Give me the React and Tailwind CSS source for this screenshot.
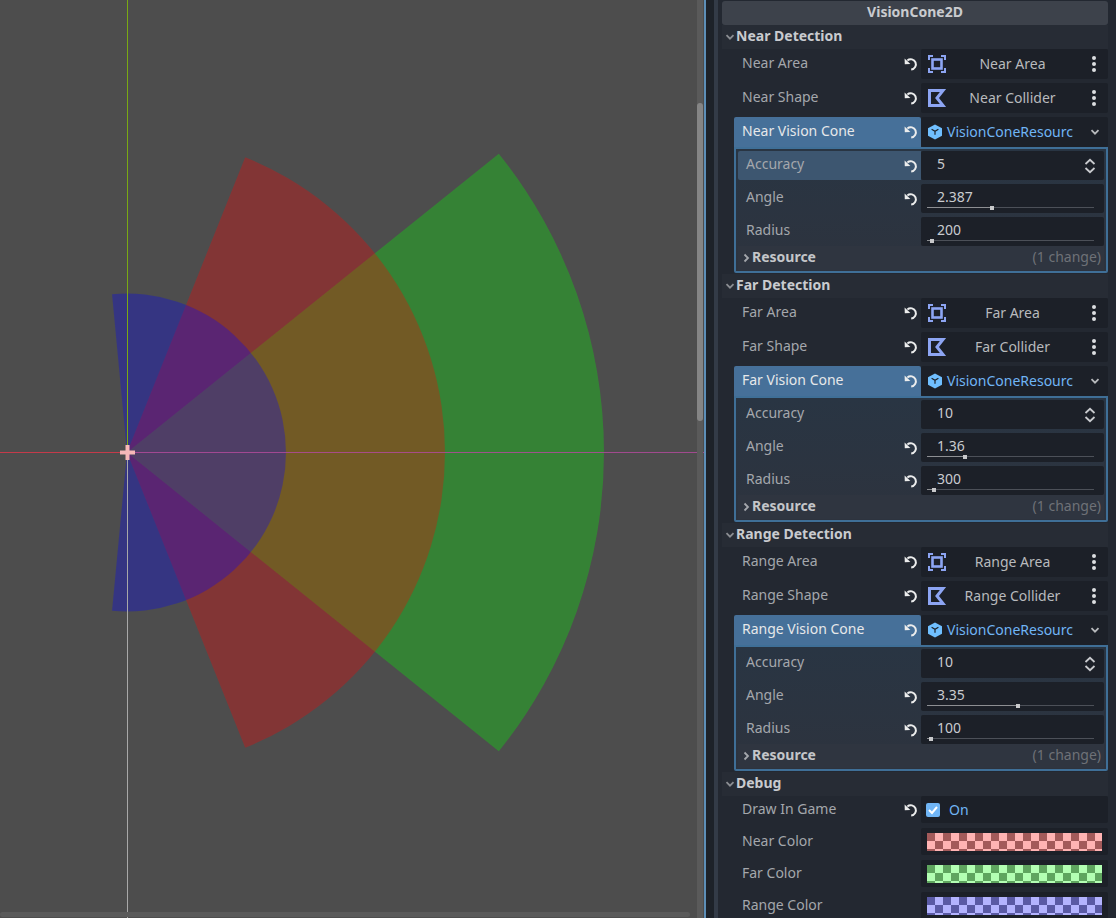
import { Fragment } from 'react';

const sections = [
  {
    title: 'Near Detection',
    area: 'Near Area',
    shape: 'Near Shape',
    collider: 'Near Collider',
    cone: 'Near Vision Cone',
    accuracy: '5',
    accuracyReset: true,
    highlight: true,
    angle: '2.387',
    anglePos: 38,
    radius: '200',
    radiusPos: 2,
    radiusReset: false,
  },
  {
    title: 'Far Detection',
    area: 'Far Area',
    shape: 'Far Shape',
    collider: 'Far Collider',
    cone: 'Far Vision Cone',
    accuracy: '10',
    accuracyReset: false,
    angle: '1.36',
    anglePos: 21.5,
    radius: '300',
    radiusPos: 3,
    radiusReset: true,
  },
  {
    title: 'Range Detection',
    area: 'Range Area',
    shape: 'Range Shape',
    collider: 'Range Collider',
    cone: 'Range Vision Cone',
    accuracy: '10',
    accuracyReset: false,
    angle: '3.35',
    anglePos: 53.5,
    radius: '100',
    radiusPos: 1,
    radiusReset: true,
  },
];

function sector(r, angle) {
  const x = 127 + r * Math.cos(angle);
  const dy = r * Math.sin(angle);
  const large = angle > Math.PI / 2 ? 1 : 0;
  return `M127 452.5 L${x} ${452.5 - dy} A${r} ${r} 0 ${large} 1 ${x} ${452.5 + dy} Z`;
}

function ResetIcon() {
  return (
    <svg width="16" height="16" viewBox="0 0 16 16" fill="none" stroke="#eceded" strokeWidth="2">
      <path d="M4.4 4.4 A5.2 5.2 0 1 1 8.2 13.6" />
      <path d="M1.6 2.6 L1.8 8.2 L7.4 8 Z" fill="#eceded" stroke="none" />
    </svg>
  );
}

function Chevron({ right, className }) {
  return (
    <svg width="10" height="10" viewBox="0 0 10 10" fill="none" stroke="currentColor" strokeWidth="1.8" className={className}>
      <path d={right ? 'M3.5 1.5 L7 5 L3.5 8.5' : 'M1.5 3.2 L5 6.7 L8.5 3.2'} />
    </svg>
  );
}

function AreaIcon() {
  return (
    <svg width="20" height="20" viewBox="0 0 20 20" fill="none" stroke="#8da5f3" strokeWidth="2">
      <path d="M2 6 V2 H6 M14 2 H18 V6 M18 14 V18 H14 M6 18 H2 V14" />
      <rect x="5.5" y="5.5" width="9" height="9" strokeWidth="2.6" />
    </svg>
  );
}

function ShapeIcon() {
  return (
    <svg width="20" height="20" viewBox="0 0 20 20" fill="none" stroke="#8da5f3" strokeWidth="3">
      <path d="M2.5 2.5 H16 L10 10 L16 17.5 H2.5 Z" />
    </svg>
  );
}

function CubeIcon() {
  return (
    <svg width="16" height="16" viewBox="0 0 16 16">
      <path d="M8 0.5 L15 4.2 V11.8 L8 15.5 L1 11.8 V4.2 Z" fill="#70bfff" />
      <path d="M4.6 5.2 L8 7.2 L11.4 5.2 M8 7.2 V10.8" fill="none" stroke="#1c2028" strokeWidth="1.2" />
    </svg>
  );
}

function Dots() {
  return (
    <div className="flex w-[30px] flex-col items-center gap-[2px] pl-[2px]">
      <span className="h-[4px] w-[4px] rounded-full bg-[#dcdee1]" />
      <span className="h-[4px] w-[4px] rounded-full bg-[#dcdee1]" />
      <span className="h-[4px] w-[4px] rounded-full bg-[#dcdee1]" />
    </div>
  );
}

function Label({ text, reset, className = '', textClass = 'top-[-1px]' }) {
  return (
    <div className={`flex items-center justify-between pr-[2px] ${className}`}>
      <span className={`relative ${textClass}`}>{text}</span>
      {reset && <ResetIcon />}
    </div>
  );
}

function NodeRow({ label, value, icon }) {
  return (
    <div className="flex h-[30px] text-[#a4a7ac]">
      <Label text={label} reset className="w-[199px] pl-[20px]" />
      <div className="flex flex-1 items-center rounded-[2px] bg-[#1c2028] pl-[6px] text-[#b8babd]">
        {icon}
        <span className="flex-1 text-center">{value}</span>
        <Dots />
      </div>
    </div>
  );
}

function SliderRow({ label, value, pos, reset }) {
  return (
    <div className="flex h-[29px] text-[#a4a7ac]">
      <Label text={label} reset={reset} textClass="top-[-2px]" className="w-[183px] pl-[8px]" />
      <div className="flex flex-1 flex-col rounded-[2px] bg-[#1c2028] pl-[6px] pr-[10px]">
        <span className="h-[23px] pl-[10px] leading-[25px] text-[#c9cbcf]">{value}</span>
        <div className="relative h-[1px] bg-[#4c5058]">
          <div className="h-[1px] bg-[#8d8f93]" style={{ width: `${pos}%` }} />
          <span
            className="absolute top-[-1px] h-[4px] w-[4px] bg-[#c8c9cb]"
            style={{ left: `${pos}%` }}
          />
        </div>
      </div>
    </div>
  );
}

function Section({ s }) {
  return (
    <Fragment>
      <Header title={s.title} />
      <div className="flex flex-col gap-[4px] pb-[1px]">
        <NodeRow label={s.area} value={s.area} icon={<AreaIcon />} />
        <NodeRow label={s.shape} value={s.collider} icon={<ShapeIcon />} />
        <div className="ml-[12px]">
          <div className="flex h-[30px]">
            <Label text={s.cone} reset className="w-[187px] rounded-t-[2px] bg-[#467099] pl-[8px] text-[#e6e8ea]" />
            <div className="flex flex-1 items-center rounded-[2px] bg-[#1c2028] pl-[6px] text-[#70b5f5]">
              <CubeIcon />
              <span className="ml-[4px] w-[127px] whitespace-nowrap">VisionConeResourc</span>
              <Chevron className="ml-[16px] text-[#b8babd]" />
            </div>
          </div>
          <div className="flex h-[126px] flex-col rounded-b-[2px] border-2 border-[#3f6f97] bg-linear-to-b from-[#293543] to-[#2d333e] pl-[2px] pr-[2px] pt-[2px]">
            <div className="flex flex-col gap-[4px]">
              <div className="flex h-[29px] text-[#a4a7ac]">
                <Label
                  text="Accuracy"
                  reset={s.accuracyReset}
                  textClass="top-[-2px]"
                  className={`w-[183px] rounded-l-[2px] pl-[8px] ${s.highlight ? 'bg-[#3d5670]' : ''}`}
                />
                <div className="flex flex-1 items-center justify-between rounded-[2px] bg-[#1c2028] pl-[16px] pr-[7px] text-[#c9cbcf]">
                  <span className="relative top-[-2px]">{s.accuracy}</span>
                  <svg width="14" height="16" viewBox="0 0 14 16" fill="none" stroke="#c9cbcf" strokeWidth="1.8">
                    <path d="M2.5 6 L7 1.8 L11.5 6 M2.5 10 L7 14.2 L11.5 10" />
                  </svg>
                </div>
              </div>
              <SliderRow label="Angle" value={s.angle} pos={s.anglePos} reset />
              <SliderRow label="Radius" value={s.radius} pos={s.radiusPos} reset={s.radiusReset} />
            </div>
            <div className="flex h-[24px] items-center justify-between bg-[#2f3540] pl-[3px] pr-[3px]">
              <div className="flex items-center font-bold text-[#c4c6c9]">
                <Chevron right className="mr-[1px] w-[10px] text-[#a4a7ac]" />
                <span className="relative top-[-1px]">Resource</span>
              </div>
              <span className="relative top-[-1px] text-[#6e7177]">(1 change)</span>
            </div>
          </div>
        </div>
      </div>
    </Fragment>
  );
}

function Header({ title }) {
  return (
    <div className="flex h-[24px] items-center bg-[#272c35] pl-[3px] font-bold text-[#c9cbcf]">
      <Chevron className="mr-[1px] text-[#8b8e93]" />
      <span className="relative top-[-1px]">{title}</span>
    </div>
  );
}

function ColorRow({ label, swatch }) {
  return (
    <div className="flex h-[27px] items-center text-[#a4a7ac]">
      <span className="relative top-[-1px] w-[199px] pl-[20px]">{label}</span>
      <div className="flex h-full flex-1 items-center rounded-[2px] bg-[#1c2028] px-[6px]">
        <div className={`h-[18px] w-full bg-[length:16px_16px] ${swatch}`} />
      </div>
    </div>
  );
}

export default function App() {
  return (
    <div className="flex h-[918px] w-[1116px] overflow-hidden bg-[#232831] font-['Noto_Sans',sans-serif] text-[14px] leading-[20px]">
      <div className="relative h-full w-[704px] shrink-0 bg-[#4d4d4d]">
        <svg width="704" height="918" className="block">
          <path d={sector(477, 0.677)} fill="#00ff00" fillOpacity="0.3" />
          <path d={sector(318, 1.19)} fill="#ff0000" fillOpacity="0.3" />
          <path d={sector(159, 1.665)} fill="#0000ff" fillOpacity="0.3" />
          <path d="M127.5 0 V452" stroke="#7aa814" />
          <path d="M127.5 452 V918" stroke="#a8a8a8" />
          <path d="M0 452.5 H127" stroke="#c43a4a" />
          <path d="M127 452.5 H704" stroke="#b04a9a" strokeOpacity="0.85" />
          <path d="M127.5 445 V460 M120 452.5 H135" stroke="#f6b8b8" strokeWidth="4" />
        </svg>
        <div className="absolute right-[1px] top-0 h-full w-[6px] bg-[#5a5a5a]">
          <div className="mt-[103px] h-[318px] rounded-[3px] bg-[#858585]" />
        </div>
        <div className="absolute bottom-[1px] left-0 h-[5px] w-[690px] rounded-[3px] bg-[#5a5a5a]" />
      </div>
      <div className="w-[2px] shrink-0 bg-[#5d8fb8]" />
      <div className="w-[8px] shrink-0 bg-[#1d2229]" />
      <div className="w-[4px] shrink-0 bg-[#333b47]" />
      <div className="ml-[4px] w-[386px] shrink-0 pt-[1px]">
        <div className="flex h-[24px] items-center justify-center rounded-[3px] bg-[#3d424b] font-bold text-[#c9cbcf]">
          <span className="relative top-[-1px]">VisionCone2D</span>
        </div>
        {sections.map((s) => (
          <Section key={s.title} s={s} />
        ))}
        <Header title="Debug" />
        <div className="flex flex-col gap-[5px]">
          <div className="flex h-[27px] items-center text-[#a4a7ac]">
            <Label text="Draw In Game" reset className="w-[199px] pl-[20px]" />
            <div className="flex h-full flex-1 items-center rounded-[2px] bg-[#1c2028] pl-[5px] text-[#70b5f5]">
              <div className="mr-[9px] flex h-[14px] w-[14px] items-center justify-center rounded-[2px] bg-[#70b5f5]">
                <svg width="10" height="10" viewBox="0 0 10 10" fill="none" stroke="#ffffff" strokeWidth="2">
                  <path d="M1 5 L4 8 L9 2" />
                </svg>
              </div>
              On
            </div>
          </div>
          <ColorRow label="Near Color" swatch="bg-[conic-gradient(#ffb3b3_25%,#a35a5a_0_50%,#ffb3b3_0_75%,#a35a5a_0)]" />
          <ColorRow label="Far Color" swatch="bg-[conic-gradient(#b3ffb3_25%,#5fa55f_0_50%,#b3ffb3_0_75%,#5fa55f_0)]" />
          <ColorRow label="Range Color" swatch="bg-[conic-gradient(#b3b3ff_25%,#5a5aa5_0_50%,#b3b3ff_0_75%,#5a5aa5_0)]" />
        </div>
      </div>
    </div>
  );
}
